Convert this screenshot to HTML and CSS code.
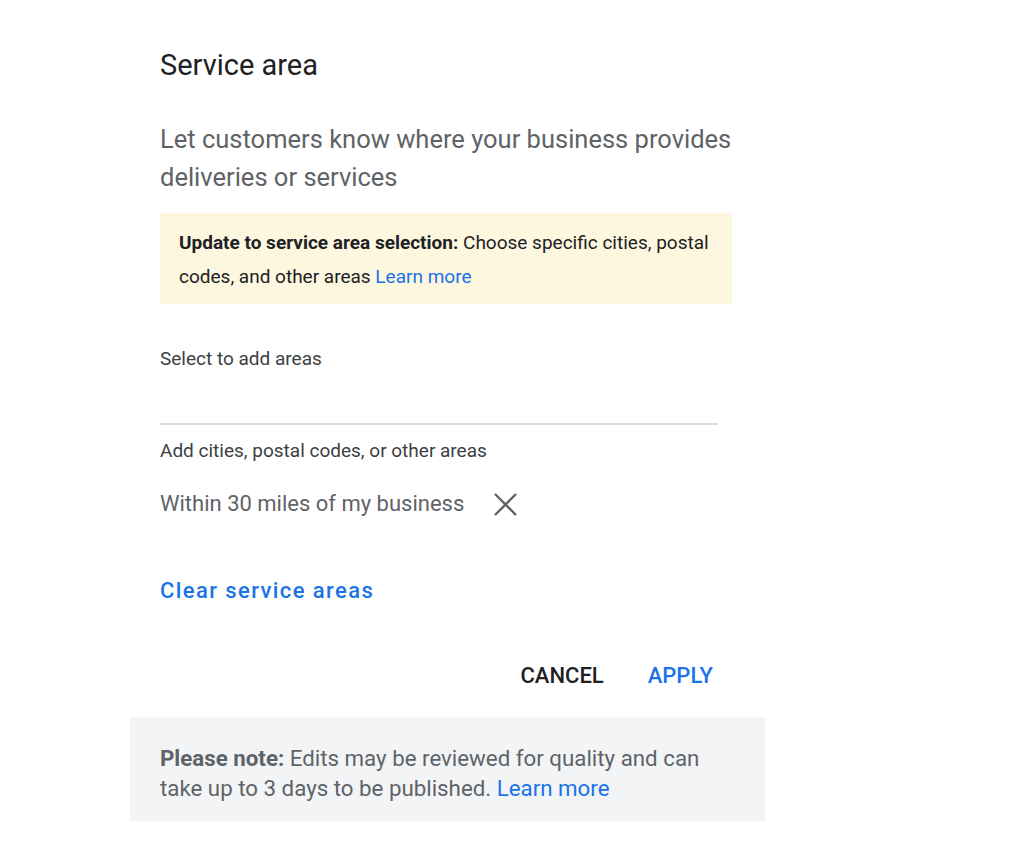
FILE: index.html
```html
<!DOCTYPE html>
<html lang="en">
<head>
    <meta charset="UTF-8">
    <meta name="viewport" content="width=device-width, initial-scale=1.0">
    <title>Service area</title>
    <link rel="stylesheet" href="styles.css">
</head>
<body>

    <!-- service area dialog -->
    <div class="dialog">
        <div class="dialog-body">
            <h2 class="title">Service area</h2>
            <p class="subtitle">Let customers know where your business provides deliveries or services</p>

            <div class="notice">
                <b>Update to service area selection:</b> Choose specific cities, postal codes, and other areas <a href="#" class="link">Learn more</a>
            </div>

            <div class="field">
                <label class="field-label" for="areaInput">Select to add areas</label>
                <input type="text" id="areaInput" class="field-input" />
                <div class="field-hint">Add cities, postal codes, or other areas</div>
            </div>

            <div class="chip">
                <span>Within 30 miles of my business</span>
                <button class="chip-remove" aria-label="Remove">
                    <svg width="23" height="23" viewBox="0 0 23 23"><path d="M1 1 22 22M22 1 1 22" stroke="#5f6368" stroke-width="2.4" fill="none"/></svg>
                </button>
            </div>

            <a href="#" class="clear-link">Clear service areas</a>

            <div class="actions">
                <button class="button cancel">CANCEL</button>
                <button class="button apply">APPLY</button>
            </div>
        </div>

        <div class="footer-note">
            <b>Please note:</b> Edits may be reviewed for quality and can take up to 3 days to be published. <a href="#" class="link">Learn more</a>
        </div>
    </div>

</body>
</html>
```

FILE: styles.css
```css
body {
    margin: 0;
    background: #fff;
    font-family: Roboto, "Liberation Sans", Arial, sans-serif;
}
.dialog {
    width: 635px;
    margin-left: 130px;
    padding-top: 44px;
}
.dialog-body {
    padding: 0 33px 0 30px;
}
.title {
    margin: 0;
    font-size: 29px;
    font-weight: 400;
    line-height: 42px;
    color: #202124;
}
.subtitle {
    margin: 34px 0 0;
    font-size: 25.5px;
    line-height: 38px;
    color: #5f6368;
}
.notice {
    margin-top: 17px;
    background: #fef7e0;
    padding: 13px 19px 10px;
    font-size: 19px;
    line-height: 34px;
    color: #202124;
}
.link {
    color: #1a73e8;
    text-decoration: none;
}
.field {
    margin-top: 43px;
    width: 558px;
}
.field-label {
    display: block;
    font-size: 19px;
    line-height: 24px;
    color: #3c4043;
}
.field-input {
    display: block;
    width: 100%;
    box-sizing: border-box;
    height: 54px;
    border: none;
    border-bottom: 2px solid #dadce0;
    outline: none;
    font-size: 20px;
    padding: 0;
}
.field-hint {
    margin-top: 14px;
    font-size: 19px;
    line-height: 24px;
    color: #3c4043;
}
.chip {
    display: flex;
    align-items: center;
    margin-top: 27px;
    font-size: 22px;
    line-height: 28px;
    color: #5f6368;
}
.chip-remove {
    margin-left: 30px;
    padding: 0;
    border: none;
    background: none;
    display: flex;
    cursor: pointer;
}
.clear-link {
    display: inline-block;
    margin-top: 59px;
    font-size: 22px;
    line-height: 28px;
    font-weight: 500;
    letter-spacing: 1.4px;
    color: #1a73e8;
    text-decoration: none;
}
.actions {
    display: flex;
    justify-content: flex-end;
    margin-top: 50px;
    padding-bottom: 20px;
    gap: 8px;
}
.button {
    padding: 7px 19px 7px 17px;
    border: none;
    background: none;
    cursor: pointer;
    font-family: inherit;
    font-size: 22px;
    line-height: 28px;
    font-weight: 500;
}
.cancel {
    color: #202124;
}
.apply {
    color: #1a73e8;
}
.footer-note {
    background: #f3f4f6;
    padding: 26px 30px 18px;
    font-size: 22.3px;
    line-height: 30px;
    color: #5f6368;
}
.footer-note b {
    font-weight: 700;
}
```
